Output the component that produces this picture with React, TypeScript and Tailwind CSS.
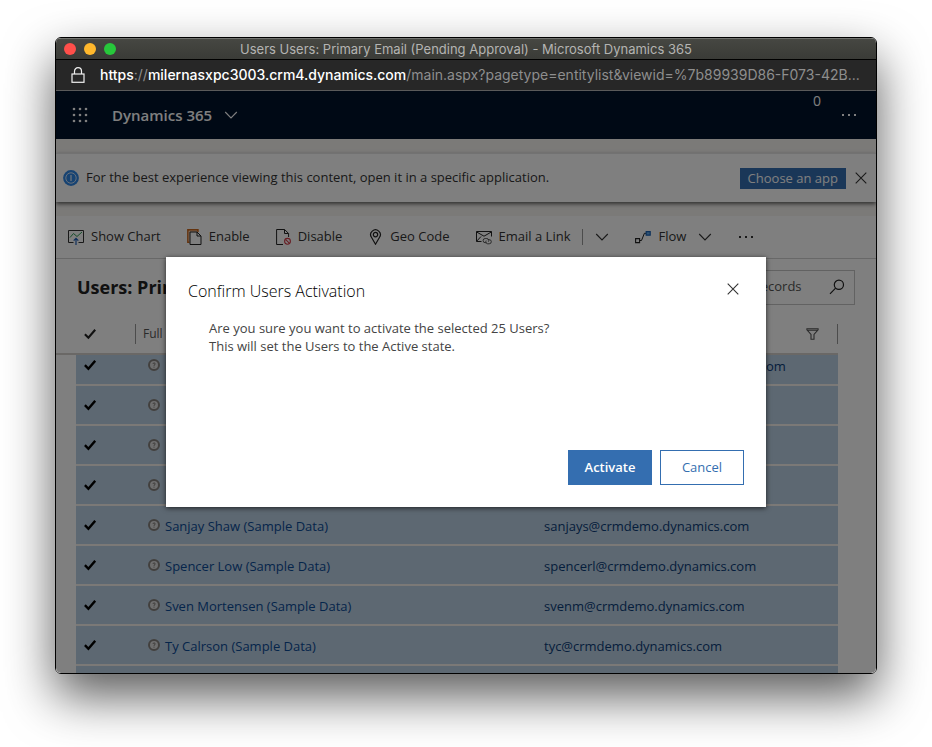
import type { ReactNode } from 'react';

type User = { name: string; email: string };

const users: User[] = [
  { name: 'Molly Clark (Sample Data)', email: 'mollyclark.hq@crmdemo.dynamics.com' },
  { name: 'Nancy Anderson (Sample Data)', email: 'nancya@crmdemo.dynamics.com' },
  { name: 'Renee Lo (Sample Data)', email: 'reneel@crmdemo.dynamics.com' },
  { name: 'Robert Lyon (Sample Data)', email: 'robertl@crmdemo.dynamics.com' },
  { name: 'Sanjay Shaw (Sample Data)', email: 'sanjays@crmdemo.dynamics.com' },
  { name: 'Spencer Low (Sample Data)', email: 'spencerl@crmdemo.dynamics.com' },
  { name: 'Sven Mortensen (Sample Data)', email: 'svenm@crmdemo.dynamics.com' },
  { name: 'Ty Calrson (Sample Data)', email: 'tyc@crmdemo.dynamics.com' },
  { name: '', email: '' },
];

function Lock() {
  return (
    <svg className="h-4 w-3.5 shrink-0" viewBox="0 0 14 16" fill="none" stroke="#f0f0f0" strokeWidth="1.2">
      <rect x="1" y="7" width="12" height="8.3" />
      <path d="M3.5 7V4.2a3.5 3.5 0 0 1 7 0V7" />
    </svg>
  );
}

function Waffle() {
  const dots = [2, 8, 14];
  return (
    <svg className="size-4" viewBox="0 0 16 16" fill="#ffffff">
      {dots.map((y) => dots.map((x) => <circle key={`${x}-${y}`} cx={x} cy={y} r="1.3" />))}
    </svg>
  );
}

function Chevron() {
  return (
    <svg className="h-2 w-3.5" viewBox="0 0 14 8" fill="none" stroke="currentColor" strokeWidth="1.1">
      <path d="M1.2 1L7 6.9 12.8 1" />
    </svg>
  );
}

function Cross() {
  return (
    <svg className="size-3" viewBox="0 0 12 12" fill="none" stroke="currentColor" strokeWidth="1.1">
      <path d="M.7.7l10.6 10.6M11.3.7L.7 11.3" />
    </svg>
  );
}

function Dots() {
  return (
    <svg className="h-2 w-4" viewBox="0 0 16 8" fill="currentColor">
      <path d="M1 3h2v2H1zM7 3h2v2H7zM13 3h2v2h-2z" />
    </svg>
  );
}

function Check({ bold = true }: { bold?: boolean }) {
  return (
    <svg className="block h-3 w-3" viewBox="0 0 12 12" fill="none" stroke={bold ? '#000000' : '#222222'} strokeWidth={bold ? 2.4 : 2.1}>
      <path d="M.9 6.2l3.5 3.6L11.2 1.8" />
    </svg>
  );
}

function InfoIcon() {
  return (
    <svg className="size-4 shrink-0" viewBox="0 0 16 16" fill="none">
      <circle cx="8" cy="8" r="7.9" fill="#2f86e4" />
      <circle cx="8" cy="8" r="5.2" stroke="#cfe2f7" strokeWidth="1" />
      <path d="M8 5v6" stroke="#cfe2f7" strokeWidth="1.4" />
    </svg>
  );
}

function ChartIcon() {
  return (
    <svg className="size-4" viewBox="0 0 16 16" fill="none">
      <path d="M5.5 13.5h-5v-12h15v12h-5" stroke="#333333" />
      <path d="M2 8.5l3.5-4 3.5 3 5-4.5" stroke="#2f9e58" />
      <path d="M8 16V9.5M5.7 11.6L8 9.3l2.3 2.3" stroke="#1f5fb8" strokeWidth="1.2" />
    </svg>
  );
}

function EnableIcon() {
  return (
    <svg className="h-4 w-[15px]" viewBox="0 0 15 16" fill="none">
      <path d="M2.5 13.2H.9V.9h10v2" stroke="#c9661c" strokeWidth="1.6" />
      <path d="M2.2 12.4V2.2h8.2" stroke="#f0b07a" strokeWidth=".8" />
      <path d="M3 3h7l4 4v8.5H3z" stroke="#222222" />
      <path d="M10 3v4h4" stroke="#222222" />
    </svg>
  );
}

function DisableIcon() {
  return (
    <svg className="h-4 w-[15px]" viewBox="0 0 15 16" fill="none">
      <path d="M7 15.5H.6V.5h8l4 4V8" stroke="#222222" />
      <path d="M8.5.5v4h4" stroke="#222222" />
      <circle cx="11.5" cy="12.3" r="2.9" stroke="#cf3a46" strokeWidth="1.1" />
      <path d="M9.5 10.3l4 4" stroke="#cf3a46" strokeWidth="1.1" />
    </svg>
  );
}

function PinIcon() {
  return (
    <svg className="h-4 w-[15px]" viewBox="0 0 15 16" fill="none" stroke="#222222" strokeWidth="1.2">
      <path d="M7.5 15.2L3.6 8.5a4.8 4.8 0 1 1 7.8 0z" />
      <circle cx="7.5" cy="5.6" r="2.2" />
    </svg>
  );
}

function MailIcon() {
  return (
    <svg className="size-4" viewBox="0 0 16 16" fill="none" stroke="#222222">
      <path d="M5.5 12.5h-5v-10h15v5" />
      <path d="M.7 3L8 7.2 15.3 3M.7 12.2L5 7.5" />
      <path d="M10.6 13.7H9.2a2.1 2.1 0 0 1 0-4.2h1.6a2 2 0 0 1 1.6 3.2M11.6 10.6h1.6a2.1 2.1 0 0 1 0 4.2h-1.6a2 2 0 0 1-1.4-3.2" stroke="#444444" strokeWidth=".9" />
    </svg>
  );
}

function FlowIcon() {
  return (
    <svg className="size-4" viewBox="0 0 16 16" fill="none">
      <path d="M.6 9.6h4v4h-4z" stroke="#222222" strokeWidth="1.1" />
      <path d="M4.8 11.5h1.7l2.9-7.2h1.9" stroke="#222222" />
      <path d="M11.2 2.6h4v3.6h-4z" fill="#62a8ea" stroke="#1b62b5" strokeWidth="1.2" />
    </svg>
  );
}

function SearchIcon() {
  return (
    <svg className="size-4 shrink-0" viewBox="0 0 16 16" fill="none" stroke="#222222" strokeWidth="1.2">
      <circle cx="9.9" cy="5.8" r="4.6" />
      <path d="M6.6 9.2L1 14.9" />
    </svg>
  );
}

function FilterIcon() {
  return (
    <svg className="h-3 w-[13px]" viewBox="0 0 13 12" fill="none" stroke="#555555" strokeWidth="1.1">
      <path d="M.9.7h11.2v1.1L8 6.4v4.9H5V6.4L.9 1.8zM1 2.2h11" />
    </svg>
  );
}

function UnknownIcon() {
  return (
    <svg className="mb-0.5 size-3 shrink-0" viewBox="0 0 12 12" fill="none">
      <circle cx="6" cy="6" r="5" fill="#dcdcdc" stroke="#85807c" strokeWidth="2" />
      <path d="M4.9 4.9c.2-1.3 2.4-1.2 2.3.1C7.1 5.8 6 5.8 6 6.8M6 7.7v.9" stroke="#6a6560" strokeWidth=".9" />
    </svg>
  );
}

function Command({ icon, children }: { icon: ReactNode; children: ReactNode }) {
  return (
    <button type="button" className="flex items-center gap-[7px]">
      {icon}
      <span>{children}</span>
    </button>
  );
}

function BrowserChrome() {
  return (
    <header className="font-['Inter',sans-serif]">
      <div className="relative flex h-[22px] items-center justify-center border-t border-b border-t-[#72736f] border-b-black bg-linear-to-b from-[#464742] to-[#3a3b37] px-2">
        <div className="absolute left-2 flex gap-2">
          <span className="size-3 rounded-full bg-[#ff4f4a]" />
          <span className="size-3 rounded-full bg-[#ffb82c]" />
          <span className="size-3 rounded-full bg-[#27c83b]" />
        </div>
        <h1 className="truncate text-[13px] leading-5 text-[#b4b4b2]">
          Users Users: Primary Email (Pending Approval) - Microsoft Dynamics 365
        </h1>
      </div>
      <div className="flex h-[31px] items-center gap-[15px] border-b border-[#5a5a5a] bg-[#272727] pr-2 pl-[15px]">
        <Lock />
        <p className="truncate text-sm text-[#8e8e8e]">
          <span className="font-medium text-white">https</span>://
          <span className="font-medium text-white">milernasxpc3003.crm4.dynamics.com</span>
          /main.aspx?pagetype=entitylist&amp;viewid=%7b89939D86-F073-42B...
        </p>
      </div>
    </header>
  );
}

function NavBar() {
  return (
    <nav className="flex h-12 items-center bg-[#00122a] pr-[19px] pl-4 text-white">
      <button type="button" aria-label="App launcher">
        <Waffle />
      </button>
      <button type="button" className="ml-6 flex items-center gap-3 text-[15px] font-semibold">
        Dynamics 365
        <Chevron />
      </button>
      <span className="mb-7 ml-auto text-sm leading-5">0</span>
      <button type="button" aria-label="More" className="ml-5">
        <Dots />
      </button>
    </nav>
  );
}

function Banner() {
  return (
    <section className="flex h-[49px] items-center border-t border-[#e4e4e4] bg-white pr-[9px] pl-[7px] shadow-[0_2px_4px_rgba(0,0,0,0.6)]">
      <InfoIcon />
      <p className="ml-[7px] truncate">
        For the best experience viewing this content, open it in a specific application.
      </p>
      <button type="button" className="ml-auto h-[21px] shrink-0 bg-[#346eb0] px-2 leading-[21px] text-white">
        Choose an app
      </button>
      <button type="button" aria-label="Dismiss" className="ml-[9px]">
        <Cross />
      </button>
    </section>
  );
}

function CommandBar() {
  return (
    <div className="flex h-[43px] items-center gap-[26px] border-b border-[#d0d0d0] bg-white px-3">
      <Command icon={<ChartIcon />}>Show Chart</Command>
      <Command icon={<EnableIcon />}>Enable</Command>
      <Command icon={<DisableIcon />}>Disable</Command>
      <Command icon={<PinIcon />}>Geo Code</Command>
      <div className="flex items-center gap-3">
        <Command icon={<MailIcon />}>Email a Link</Command>
        <span className="h-4 w-px bg-[#999999]" />
        <button type="button" aria-label="More email options">
          <Chevron />
        </button>
      </div>
      <div className="flex items-center gap-3">
        <Command icon={<FlowIcon />}>Flow</Command>
        <button type="button" aria-label="More flow options">
          <Chevron />
        </button>
      </div>
      <button type="button" aria-label="More commands">
        <Dots />
      </button>
    </div>
  );
}

function UserGrid() {
  return (
    <main className="min-h-0 flex-1 overflow-hidden bg-white">
      <div className="flex h-14 items-center justify-between px-[21px]">
        <h2 className="text-lg font-bold text-[#222222]">Users: Primary Email</h2>
        <label className="flex h-[35px] w-[178px] items-center border border-[#c4c4c4] pr-[9px] pl-3">
          <input
            type="search"
            aria-label="Search for records"
            placeholder="Search for records"
            className="w-full min-w-0 bg-transparent outline-none placeholder:text-[#555555]"
          />
          <SearchIcon />
        </label>
      </div>
      <div className="pr-[38px]">
        <table className="w-full table-fixed border-separate border-spacing-0 text-left">
          <colgroup>
            <col className="w-5" />
            <col className="w-[59px]" />
            <col className="w-[401px]" />
            <col />
          </colgroup>
          <thead>
            <tr className="h-10 text-xs text-[#555555]">
              <td className="border-b-2 border-[#d4d0cc]" />
              <th className="border-b-2 border-[#d4d0cc] pl-2">
                <Check bold={false} />
              </th>
              <th className="border-b-2 border-[#d4d0cc] font-normal">
                <span className="block border-l border-[#999999] pl-[7px] leading-5">Full Name</span>
              </th>
              <th className="border-b-2 border-[#d4d0cc] font-normal">
                <span className="flex items-center justify-between border-r border-[#999999] pr-[18px] pl-2 leading-5">
                  Primary Email
                  <FilterIcon />
                </span>
              </th>
            </tr>
          </thead>
          <tbody>
            {users.map((user) => (
              <tr key={user.email} className="h-10 first:h-[31px]">
                <td />
                <td className="border-b-2 border-[#f6f3ef] bg-[#bad0e4] pb-[13px] pl-2 align-bottom">
                  <Check />
                </td>
                <td className="border-b-2 border-[#f6f3ef] bg-[#bad0e4] pb-[7px] pl-[13px] align-bottom">
                  <div className="flex items-center gap-[5px] leading-[22px]">
                    <UnknownIcon />
                    <a href="#user" className="text-[#0a4a96]">
                      {user.name}
                    </a>
                  </div>
                </td>
                <td className="border-b-2 border-[#f6f3ef] bg-[#bad0e4] pb-[7px] pl-2 align-bottom leading-[22px]">
                  <a href="#email" className="text-[#0b3c78]">
                    {user.email}
                  </a>
                </td>
              </tr>
            ))}
          </tbody>
        </table>
      </div>
    </main>
  );
}

function ConfirmDialog() {
  return (
    <div className="absolute inset-0 flex items-center justify-center bg-black/50">
      <section
        role="dialog"
        aria-modal="true"
        aria-labelledby="dialog-title"
        className="flex h-[250px] w-[600px] max-w-full flex-col bg-white p-[22px] shadow-[0_1px_5px_rgba(0,0,0,0.7)]"
      >
        <div className="flex items-start justify-between">
          <h2 id="dialog-title" className="text-base font-light text-black">
            Confirm Users Activation
          </h2>
          <button type="button" aria-label="Close" className="mt-1 mr-[5px] text-[#333333]">
            <Cross />
          </button>
        </div>
        <p className="mt-4 pl-[21px] leading-[18px] text-[#444444]">
          Are you sure you want to activate the selected 25 Users?
          <br />
          This will set the Users to the Active state.
        </p>
        <div className="mt-auto flex justify-end gap-2">
          <button type="button" className="h-[35px] w-[84px] border border-[#346eb0] bg-[#346eb0] font-semibold text-white">
            Activate
          </button>
          <button type="button" className="h-[35px] w-[84px] border border-[#346eb0] bg-white text-[#346eb0]">
            Cancel
          </button>
        </div>
      </section>
    </div>
  );
}

export default function App() {
  return (
    <div className="flex h-screen flex-col overflow-hidden bg-white px-[55px] pt-[37px] pb-[73px]">
      <div className="flex min-h-0 flex-1 flex-col overflow-hidden rounded-md border border-black shadow-[0_22px_50px_rgba(0,0,0,0.65)]">
        <BrowserChrome />
        <div className="relative flex min-h-0 flex-1 flex-col bg-[#f6f4f1] font-['Open_Sans',sans-serif] text-[13px] text-[#333333]">
          <NavBar />
          <div className="py-3.5">
            <Banner />
          </div>
          <CommandBar />
          <UserGrid />
          <ConfirmDialog />
        </div>
      </div>
    </div>
  );
}
